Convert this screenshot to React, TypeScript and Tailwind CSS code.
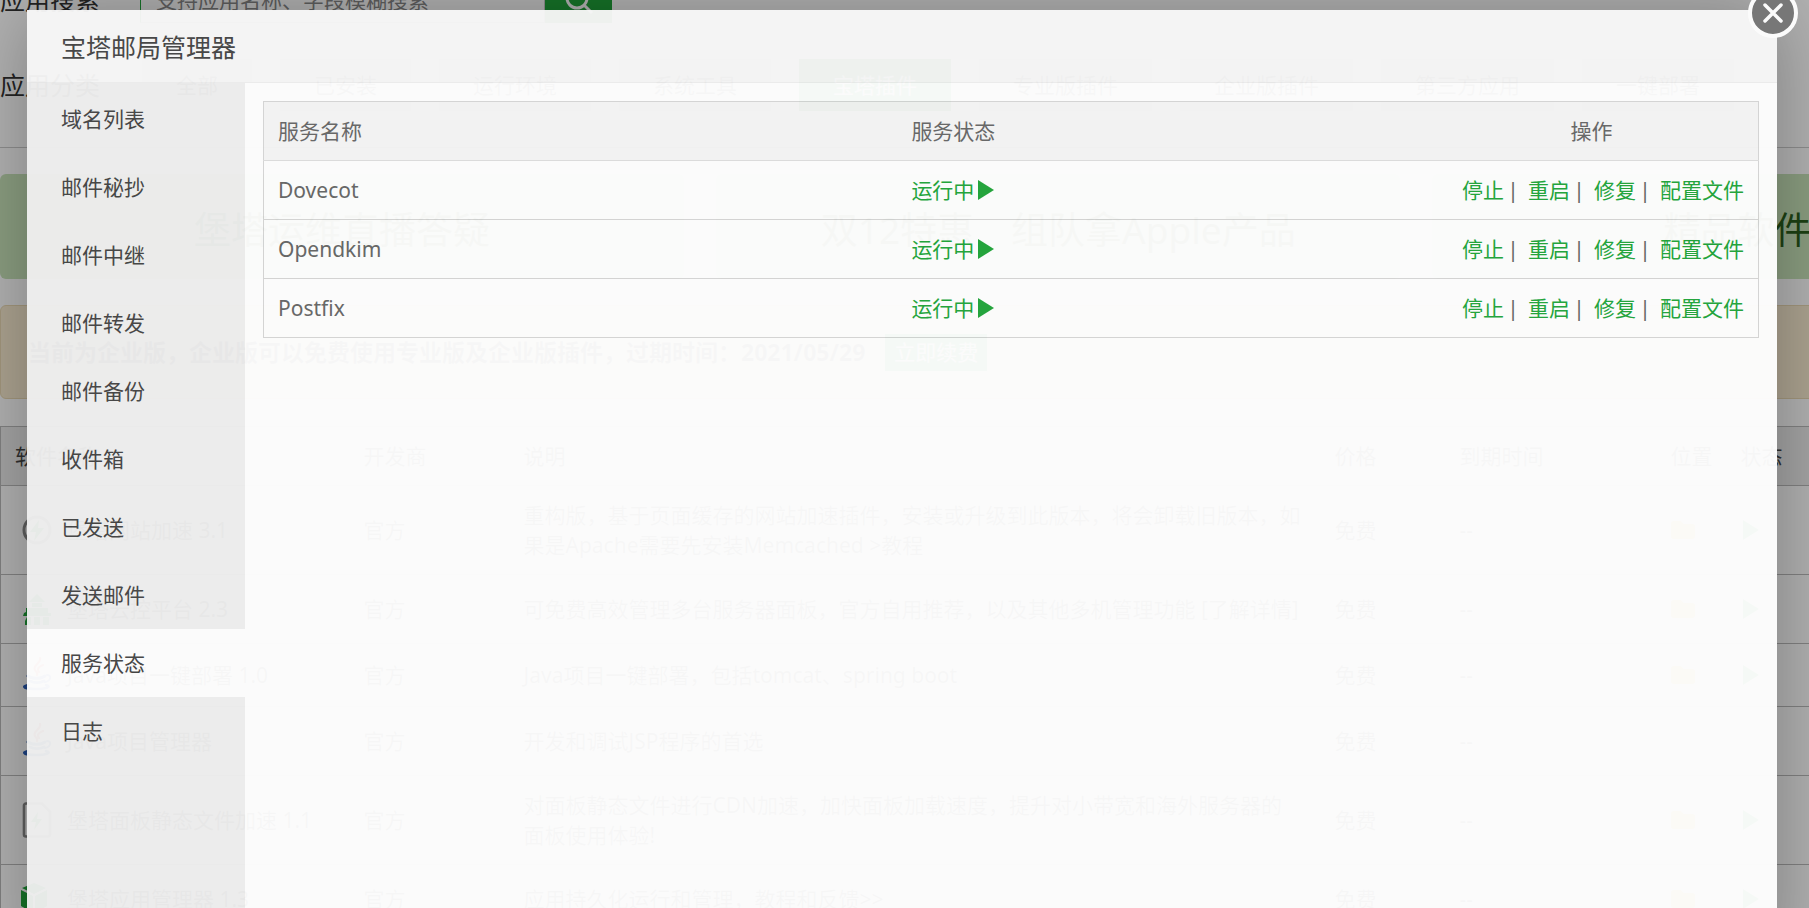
import { useState } from "react";
import { FaFolder } from "react-icons/fa";

const menus = [
  "域名列表",
  "邮件秘抄",
  "邮件中继",
  "邮件转发",
  "邮件备份",
  "收件箱",
  "已发送",
  "发送邮件",
  "服务状态",
  "日志",
];

const services = ["Dovecot", "Opendkim", "Postfix"];
const actions = ["停止", "重启", "修复", "配置文件"];

const categories = [
  "全部",
  "已安装",
  "运行环境",
  "系统工具",
  "宝塔插件",
  "专业版插件",
  "企业版插件",
  "第三方应用",
  "一键部署",
];

const banners = ["堡塔运维直播答疑", "双12特惠　组队拿Apple产品", "精品软件推荐"];

const BoltIcon = () => (
  <svg className="w-8 h-8" viewBox="0 0 32 32">
    <circle cx="16" cy="16" r="13" fill="none" stroke="#888" strokeWidth="3" />
    <path d="M18 6 9 18h6l-2 9 10-13h-6z" fill="#20a53a" />
  </svg>
);

const CloudIcon = () => (
  <svg className="w-8 h-8" viewBox="0 0 32 32" fill="#20a53a">
    <path d="M16 1 8 9h16zM11 10h10v4H11z" />
    <path d="M5 15h22v5h3v3H2l1-3 2-1zM6 24h4v8H4v-4zM13 24h6v8h-6zM22 24h6v8h-6z" />
  </svg>
);

const JavaIcon = () => (
  <svg className="w-8 h-9" viewBox="0 0 32 36" fill="none" strokeLinecap="round">
    <path d="M19 1c2 5-8 7-5 12 1 2 3 3 2 5M22 8c-5 2-6 4-4 7" stroke="#e2453c" strokeWidth="2.2" />
    <path d="M7 19c4 3 13 3 17 0M9 24c4 2 10 2 14 0" stroke="#2a5db8" strokeWidth="3" />
    <path d="M26 18c5 0 4 6-2 7" stroke="#2a5db8" strokeWidth="2" />
    <path d="M7 28c-8 2-2 4 8 4 9 0 17-2 10-4" stroke="#2a5db8" strokeWidth="2.6" />
  </svg>
);

const FileIcon = () => (
  <svg className="w-8 h-9" viewBox="0 0 32 36">
    <path d="M5 1.5h16l8 8v23a2 2 0 0 1-2 2H5a2 2 0 0 1-2-2v-29a2 2 0 0 1 2-2z" fill="none" stroke="#888" strokeWidth="2.6" />
    <path d="m17 10-7 10h5l-2 8 8-11h-5z" fill="#20a53a" />
  </svg>
);

const CubeIcon = () => (
  <svg className="w-8 h-8" viewBox="0 0 32 32" fill="#20a53a">
    <path d="m1 5 12-5 12 5-12 6z" />
    <path d="m0 7 12 6v17L0 23z" />
    <path d="m26 7-12 6v17l12-7z" />
  </svg>
);

const PlayIcon = () => (
  <svg className="w-4 h-5 shrink-0" viewBox="0 0 16 20" fill="#20a53a">
    <path d="M0 0v20l16-10z" />
  </svg>
);

const plugins = [
  {
    name: "堡塔网站加速 3.1",
    icon: <BoltIcon />,
    desc: "重构版，基于页面缓存的网站加速插件，安装或升级到此版本，将会卸载旧版本，如果是Apache需要先安装Memcached >教程",
    height: "h-[89px]",
    installed: true,
  },
  {
    name: "堡塔云控平台 2.3",
    icon: <CloudIcon />,
    desc: "可免费高效管理多台服务器面板，官方自用推荐，以及其他多机管理功能 [了解详情]",
    height: "h-[69px]",
    installed: true,
  },
  {
    name: "Java项目一键部署 1.0",
    icon: <JavaIcon />,
    desc: "Java项目一键部署，包括tomcat、spring boot",
    height: "h-[63px]",
    installed: true,
  },
  {
    name: "Java项目管理器",
    icon: <JavaIcon />,
    desc: "开发和调试JSP程序的首选",
    height: "h-[69px]",
    installed: false,
  },
  {
    name: "堡塔面板静态文件加速 1.1",
    icon: <FileIcon />,
    desc: "对面板静态文件进行CDN加速，加快面板加载速度，提升对小带宽和海外服务器的面板使用体验!",
    height: "h-[89px]",
    installed: true,
  },
  {
    name: "堡塔应用管理器 1.3",
    icon: <CubeIcon />,
    desc: "应用持久化运行和管理，教程和反馈>>",
    height: "h-[69px]",
    installed: true,
  },
];

const SoftStore = () => (
  <div className="w-[117%] text-[#444]">
    <div className="-mt-6 flex h-[47px] items-center">
      <label htmlFor="soft-search" className="w-[140px] text-[25px] text-[#333]">
        应用搜索
      </label>
      <input
        id="soft-search"
        type="text"
        placeholder="支持应用名称、字段模糊搜索"
        className="h-full w-[405px] border border-[#ccc] border-l-[#20a53a] pl-[15px] placeholder:text-[#888]"
      />
      <button aria-label="搜索" className="flex h-full w-[67px] items-center justify-center bg-[#20a53a]">
        <svg className="w-8 h-8" viewBox="0 0 32 32" fill="none" stroke="#fff" strokeWidth="3">
          <circle cx="14" cy="14" r="10" />
          <path d="m21 21 8 8" />
        </svg>
      </button>
    </div>

    <div className="mt-9 flex items-center border-b border-[#ccc] pb-9">
      <span className="w-[142px] text-[25px] text-[#333]">应用分类</span>
      <div className="flex gap-7">
        {categories.map((item) => (
          <button
            key={item}
            className={`h-[52px] px-[34px] ${
              item === "宝塔插件" ? "bg-[#20a53a] text-white" : "bg-[#f1f1f1]"
            }`}
          >
            {item}
          </button>
        ))}
      </div>
    </div>

    <div className="mt-[26px] grid grid-cols-3 gap-8">
      {banners.map((text) => (
        <div
          key={text}
          className="flex h-[105px] items-center justify-center rounded-md bg-[#c7e3b9] pt-1.5 text-[37px] text-[#2a5e1c]"
        >
          {text}
        </div>
      ))}
    </div>

    <div className="mt-[26px] flex h-[94px] items-center gap-5 rounded-md border border-[#ead9b4] bg-[#f8ebd0] pl-[27px]">
      <strong className="text-[23px]">
        当前为企业版，企业版可以免费使用专业版及企业版插件，过期时间：2021/05/29
      </strong>
      <button className="h-[37px] bg-[#20a53a] px-[9px] text-white">立即续费</button>
    </div>

    <table className="mt-[27px] w-full table-fixed border-collapse border border-[#bbb] text-left leading-[30px]">
      <thead>
        <tr className="h-[59px] border-b border-[#bbb] bg-[#ededed]">
          <th className="w-[349px] pl-[14px] font-normal">软件名称</th>
          <th className="w-[160px] pl-[14px] font-normal">开发商</th>
          <th className="w-[811px] px-[14px] font-normal">说明</th>
          <th className="w-[125px] pl-[14px] font-normal">价格</th>
          <th className="w-[211px] pl-[14px] font-normal">到期时间</th>
          <th className="w-[70px] pl-[14px] font-normal">位置</th>
          <th className="pl-[14px] font-normal">状态</th>
        </tr>
      </thead>
      <tbody>
        {plugins.map((item) => (
          <tr key={item.name} className={`border-b border-[#bbb] ${item.height}`}>
            <td className="pl-5">
              <div className="flex items-center gap-[14px]">
                {item.icon}
                {item.name}
              </div>
            </td>
            <td className="pl-[14px]">官方</td>
            <td className="pr-[19px] pl-[14px]">{item.desc}</td>
            <td className="pl-[14px]">免费</td>
            <td className="pl-[14px]">--</td>
            <td className="pl-[14px]">
              {item.installed && <FaFolder className="text-2xl text-[#f0c040]" />}
            </td>
            <td className="pl-4">{item.installed && <PlayIcon />}</td>
          </tr>
        ))}
      </tbody>
    </table>
  </div>
);

const ServiceTable = () => (
  <table className="w-full border-collapse border border-[#d6d6d6] text-left text-[#666]">
    <thead>
      <tr className="h-[59px] border-b border-[#ddd] bg-[#f5f5f5]">
        <th className="w-[42.4%] px-[14px] font-normal">服务名称</th>
        <th className="w-[35.3%] px-[14px] font-normal">服务状态</th>
        <th className="px-[14px] text-center font-normal">操作</th>
      </tr>
    </thead>
    <tbody>
      {services.map((name) => (
        <tr key={name} className="h-[59px] border-b border-[#d6d6d6]">
          <td className="px-[14px]">{name}</td>
          <td className="px-[14px]">
            <a href="#" className="flex items-center gap-1 text-[#20a53a]">
              运行中
              <PlayIcon />
            </a>
          </td>
          <td className="px-[14px]">
            <div className="flex justify-end">
              {actions.map((action, i) => (
                <span key={action} className="flex">
                  {i > 0 && <span className="ml-[3px] mr-[9px] w-3 text-center">|</span>}
                  <a href="#" className="text-[#20a53a]">
                    {action}
                  </a>
                </span>
              ))}
            </div>
          </td>
        </tr>
      ))}
    </tbody>
  </table>
);

export default function App() {
  const [active, setActive] = useState("服务状态");

  return (
    <main className="relative h-screen overflow-hidden bg-white font-['Noto_Sans','Noto_Sans_CJK_SC',sans-serif] text-[21px] leading-[30px]">
      <SoftStore />

      {/* Shade + dialog */}
      <div className="absolute inset-0 bg-black/30 pt-2.5 pr-8 pl-[27px]">
        <div
          role="dialog"
          aria-label="宝塔邮局管理器"
          className="relative flex h-[960px] flex-col bg-white opacity-96 shadow-[1px_1px_75px_rgba(0,0,0,0.3)]"
        >
          <h2 className="flex h-[73px] shrink-0 items-center border-b border-[#eee] bg-[#f7f7f7] pt-0.5 pl-[34px] text-[25px] text-[#444]">
            宝塔邮局管理器
          </h2>
          <button
            aria-label="关闭"
            className="absolute -top-[22px] -right-[21px] flex size-[50px] items-center justify-center rounded-full border-4 border-white bg-[#757575]"
          >
            <svg className="size-5" viewBox="0 0 20 20" stroke="#fff" strokeWidth="3.5" strokeLinecap="round">
              <path d="m2 2 16 16M18 2 2 18" />
            </svg>
          </button>

          <div className="flex flex-1">
            <nav className="w-[218px] shrink-0 bg-[#efefef] pt-0.5">
              {menus.map((item) => (
                <button
                  key={item}
                  onClick={() => setActive(item)}
                  className={`block h-[68px] w-full pl-[34px] text-left text-[#444] ${
                    item === active ? "bg-white" : ""
                  }`}
                >
                  {item}
                </button>
              ))}
            </nav>
            <section className="flex-1 p-[18px]">
              <ServiceTable />
            </section>
          </div>
        </div>
      </div>
    </main>
  );
}
